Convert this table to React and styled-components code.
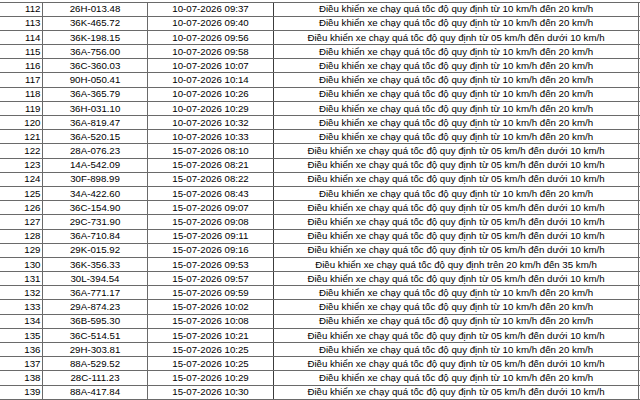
import React from "react";
import styled, { createGlobalStyle } from "styled-components";

const GlobalStyle = createGlobalStyle`
  html, body {
    margin: 0;
    padding: 0;
    background: #fff;
  }
  body {
    width: 640px;
    height: 400px;
    overflow: hidden;
  }
`;

const ROW_H = 14.2;

const SheetStyled = styled.div`
  margin-top: 1.5px;
  border-top: 1px solid #6a6a6a;
  font-family: "Liberation Sans", Arial, sans-serif;
  font-size: 9.7px;
  color: #000;
`;

const RowStyled = styled.div`
  display: grid;
  grid-template-columns: 43px 105px 126px 365px;
  height: ${ROW_H}px;
  box-sizing: border-box;
  border-bottom: 1px solid #6a6a6a;
`;

const Cell = styled.div`
  display: flex;
  align-items: center;
  justify-content: ${(p) => (p.$right ? "flex-end" : "center")};
  padding-right: ${(p) => (p.$right ? "1.5px" : "0")};
  box-sizing: border-box;
  border-right: ${(p) => (p.$heavy ? "1px solid #3c3c3c" : "1px solid #6a6a6a")};
  white-space: nowrap;
  overflow: hidden;
  line-height: 1;
`;

const LOW = "Điều khiển xe chạy quá tốc độ quy định từ 05 km/h đến dưới 10 km/h";
const MID = "Điều khiển xe chạy quá tốc độ quy định từ 10 km/h đến 20 km/h";
const HIGH = "Điều khiển xe chạy quá tốc độ quy định trên 20 km/h đến 35 km/h";

const rows = [
  [112, "26H-013.48", "10-07-2026 09:37", MID],
  [113, "36K-465.72", "10-07-2026 09:40", MID],
  [114, "36K-198.15", "10-07-2026 09:56", LOW],
  [115, "36A-756.00", "10-07-2026 09:58", MID],
  [116, "36C-360.03", "10-07-2026 10:07", MID],
  [117, "90H-050.41", "10-07-2026 10:14", MID],
  [118, "36A-365.79", "10-07-2026 10:26", MID],
  [119, "36H-031.10", "10-07-2026 10:29", MID],
  [120, "36A-819.47", "10-07-2026 10:32", MID],
  [121, "36A-520.15", "10-07-2026 10:33", MID],
  [122, "28A-076.23", "15-07-2026 08:10", LOW],
  [123, "14A-542.09", "15-07-2026 08:21", LOW],
  [124, "30F-898.99", "15-07-2026 08:22", LOW],
  [125, "34A-422.60", "15-07-2026 08:43", MID],
  [126, "36C-154.90", "15-07-2026 09:07", LOW],
  [127, "29C-731.90", "15-07-2026 09:08", LOW],
  [128, "36A-710.84", "15-07-2026 09:11", LOW],
  [129, "29K-015.92", "15-07-2026 09:16", LOW],
  [130, "36K-356.33", "15-07-2026 09:53", HIGH],
  [131, "30L-394.54", "15-07-2026 09:57", LOW],
  [132, "36A-771.17", "15-07-2026 09:59", MID],
  [133, "29A-874.23", "15-07-2026 10:02", MID],
  [134, "36B-595.30", "15-07-2026 10:08", MID],
  [135, "36C-514.51", "15-07-2026 10:21", LOW],
  [136, "29H-303.81", "15-07-2026 10:25", MID],
  [137, "88A-529.52", "15-07-2026 10:25", LOW],
  [138, "28C-111.23", "15-07-2026 10:29", MID],
  [139, "88A-417.84", "15-07-2026 10:30", LOW],
];

export default function App() {
  return (
    <>
      <GlobalStyle />
      <SheetStyled>
        {rows.map(([no, plate, time, violation]) => (
          <RowStyled key={no}>
            <Cell $right>{no}</Cell>
            <Cell>{plate}</Cell>
            <Cell $heavy>{time}</Cell>
            <Cell>{violation}</Cell>
          </RowStyled>
        ))}
      </SheetStyled>
    </>
  );
}
